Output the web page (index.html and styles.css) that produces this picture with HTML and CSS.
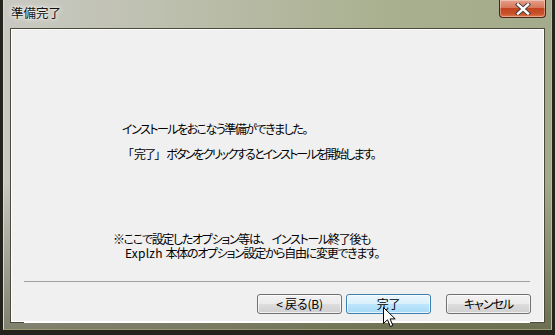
FILE: index.html
```html
<!DOCTYPE html>
<html>
<head>
<meta charset="utf-8">
<title>準備完了</title>
<link rel="stylesheet" href="styles.css">
</head>
<body>

<div class="window">
    <div class="titlebar">
        <span class="title">準備完了</span>
        <div class="closebtn">
            <svg width="22" height="12" viewBox="0 0 22 12">
                <path d="M6 1.5 L16 10.5 M16 1.5 L6 10.5" stroke="#3a3a3a" stroke-width="4.2" stroke-linecap="square"/>
                <path d="M6 1.5 L16 10.5 M16 1.5 L6 10.5" stroke="#ffffff" stroke-width="2.4" stroke-linecap="square"/>
            </svg>
        </div>
    </div>

    <div class="content">
        <div class="main">
            <p class="msg">インストールをおこなう準備ができました。</p>
            <p class="msg tight"><span class="br">「</span>完了<span class="br">」</span>ボタンをクリックするとインストールを開始します。</p>

            <div class="note">
                <p>※ここで設定したオプション等は<span class="br">、</span>インストール終了後も</p>
                <p class="indent"><span class="latin">Explzh </span>本体のオプション設定から自由に変更できます。</p>
            </div>
        </div>

        <div class="footer">
            <div class="buttons">
                <button class="btn">&lt;&nbsp;戻る(B)</button>
                <button class="btn hot">完了</button>
                <button class="btn cancel">キャンセル</button>
            </div>
        </div>
    </div>
</div>

<svg class="cursor" width="13" height="21" viewBox="0 0 13 21">
    <path d="M0.5 0.5 L0.5 16.5 L4.5 12.8 L7.3 19.5 L9.8 18.4 L7.1 11.9 L12.2 11.9 Z" fill="#ffffff" stroke="#000000" stroke-width="1" stroke-linejoin="miter"/>
</svg>

</body>
</html>
```

FILE: styles.css
```css
html, body
{
    margin: 0;
    padding: 0;
    width: 555px;
    height: 335px;
    overflow: hidden;
    background-color: #24241c;
    font-family: "Noto Sans CJK JP", "Noto Sans", sans-serif;
}

.window {
    margin-left: 3px;
    width: 549px;
    height: 330px;
    box-sizing: border-box;
    padding: 0 6px 6px 6px;
    display: flex;
    flex-direction: column;
    background: linear-gradient(to bottom, rgba(0,0,0,0) 0%, rgba(0,0,0,0) 55%, rgba(40,40,10,0.45) 100%),
                linear-gradient(to right, #c9c9c2 0%, #bdbfae 30%, #a9b08f 70%, #a4ab8c 100%);
    border-left: 1px solid #d8d8cc;
    border-right: 1px solid #b8bca8;
    border-bottom: 1px solid #9a9a70;
}

.titlebar {
    height: 28px;
    display: flex;
    align-items: flex-start;
    justify-content: space-between;
}

.title {
    font-size: 12.5px;
    line-height: 14px;
    margin-top: 6px;
    margin-left: 1px;
    color: #111;
    text-shadow: 0 0 6px #ffffff, 0 0 3px #ffffff;
}

.closebtn {
    width: 47px;
    height: 18px;
    margin-right: -1px;
    box-sizing: border-box;
    border: 1px solid #4e2418;
    border-top: none;
    border-radius: 0 0 4px 4px;
    background: linear-gradient(to bottom, #e4a08a 0%, #d8775a 45%, #c24520 50%, #c9502a 80%, #e07a4a 100%);
    box-shadow: inset 0 0 0 1px rgba(255,255,255,0.35);
    display: flex;
    align-items: center;
    justify-content: center;
}

.content {
    flex: 1;
    display: flex;
    flex-direction: column;
    background-color: #f0f0f0;
    border: 1px solid #4a4a3a;
    box-shadow: inset 0 0 0 1px #ffffff;
}

.main {
    flex: 1;
    padding: 93px 0 0 111px;
}

.msg {
    margin: 0 0 11px 0;
    font-size: 12px;
    line-height: 14px;
    color: #000;
    font-feature-settings: "palt";
    letter-spacing: -1.5px;
}

.msg.tight {
    letter-spacing: -1.85px;
}

.br {
    font-feature-settings: normal;
    letter-spacing: 0;
}

.note {
    margin-top: 71px;
    margin-left: -9px;
}

.note p {
    margin: 0;
    font-size: 12px;
    line-height: 14px;
    color: #000;
    font-feature-settings: "palt";
    letter-spacing: -1.3px;
}

.note .latin {
    letter-spacing: 0.2px;
}

.note .indent {
    padding-left: 12px;
}

.footer {
    margin: 0 14px 0 13px;
    border-top: 1px solid #a0a0a0;
    box-shadow: 0 1px 0 #ffffff;
}

.buttons {
    display: flex;
    justify-content: flex-end;
    padding: 12px 0 8px 0;
    margin-right: -1px;
}

.btn {
    width: 85px;
    height: 20px;
    padding: 0;
    margin-left: 4px;
    font-family: "Noto Sans CJK JP", "Noto Sans", sans-serif;
    font-size: 12px;
    line-height: 16px;
    color: #000;
    font-feature-settings: "palt";
    letter-spacing: -0.2px;
    border: 1px solid #707070;
    border-radius: 3px;
    background: linear-gradient(to bottom, #f2f2f2 0%, #ebebeb 50%, #dddddd 50%, #cfcfcf 100%);
    box-shadow: inset 0 0 0 1px rgba(255,255,255,0.7);
}

.btn.hot {
    border-color: #3c7fb1;
    background: linear-gradient(to bottom, #eaf6fd 0%, #d9f0fc 50%, #bee6fd 50%, #a7d9f5 100%);
}

.btn.cancel {
    margin-left: 15px;
    letter-spacing: -1px;
}

.cursor {
    position: absolute;
    left: 383px;
    top: 307px;
}
```
